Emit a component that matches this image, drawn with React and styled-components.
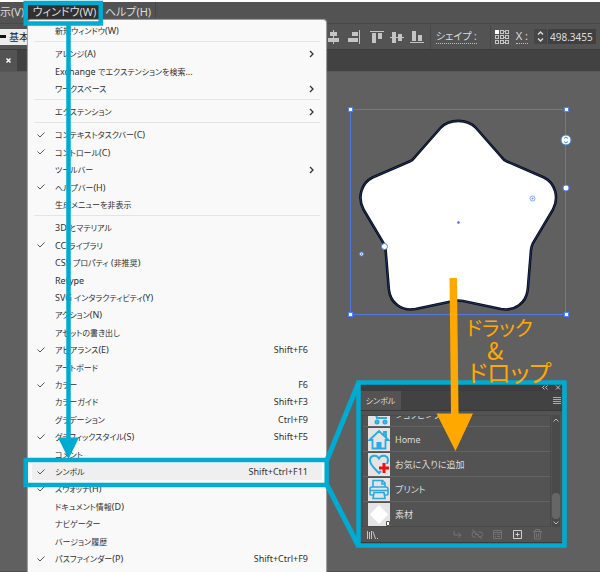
import React from 'react';
import styled, {createGlobalStyle} from 'styled-components';

const COLOR = {
    BAR: '#535353',
    DARK: '#424242',
    CANVAS: '#606060',
    LINE: '#484848',
    MENU: '#f9f9f9',
    MENU_TEXT: '#303030',
    TEXT: '#dcdcdc',
    ICON: '#c4c4c4',
    SELECTION: '#4f80ff',
    TEAL: '#00abd1',
    ORANGE: '#ffa800',
    SYMBOL: '#2ba9e1',
};

const FONT = '"Noto Sans", "Noto Sans CJK JP", sans-serif';

const GlobalStyle = createGlobalStyle`
  * {
    box-sizing: border-box;
  }

  body {
    margin: 0;
    background: #fff;
    font-family: ${FONT};
    font-feature-settings: 'palt';
  }

  button, input {
    margin: 0;
    padding: 0;
    border: 0;
    background: none;
    color: inherit;
    font: inherit;
    font-feature-settings: inherit;
  }

  svg {
    display: block;
  }
`;

const Screen = styled.div`
  position: relative;
  display: flex;
  flex-direction: column;
  height: 100vh;
  padding-top: 2px;
  overflow: hidden;
`;

const MenuBar = styled.nav`
  display: flex;
  flex: none;
  height: 22px;
  background: ${COLOR.BAR};
  border-bottom: 1px solid ${COLOR.LINE};
  color: ${COLOR.TEXT};
  font-size: 11px;
  line-height: 20px;
`;

const MenuBarButton = styled.button`
  width: ${p => p.$width}px;
  height: 20px;
  overflow: hidden;
  text-align: ${p => p.$align || 'center'};
  white-space: nowrap;
  background: ${p => p.$open ? '#303030' : 'transparent'};
`;

const Toolbar = styled.div`
  display: flex;
  flex: none;
  align-items: center;
  justify-content: space-between;
  height: 26px;
  padding-right: 4px;
  background: ${COLOR.BAR};
  border-bottom: 1px solid #3a3a3a;
  color: ${COLOR.TEXT};
  font-size: 10px;
`;

const BrushButton = styled.button`
  display: flex;
  align-items: center;
  gap: 3px;
  height: 16px;
  background: #ececec;
  color: #222;

  &::before {
    content: '';
    width: 6px;
    height: 3px;
    background: #111;
  }
`;

const ToolGroup = styled.div`
  display: flex;
  align-items: center;
  gap: ${p => p.$gap || 0}px;
  margin-right: ${p => p.$space || 0}px;
`;

const Divider = styled.span`
  width: 1px;
  height: 24px;
  margin-right: ${p => p.$space || 0}px;
  background: ${COLOR.LINE};
`;

const DottedLabel = styled.label`
  border-bottom: 1px dotted #c0c0c0;
  font-size: ${p => p.$size}px;
  line-height: 14px;
  white-space: pre;
`;

const Stepper = styled.button`
  display: grid;
  place-items: center;
  width: 13px;
  height: 15px;
  background: #464646;
`;

const NumberField = styled.input`
  width: 48px;
  height: 15px;
  padding-left: 2px;
  background: #404040;
  font-size: 10px;
`;

const TabStrip = styled.div`
  flex: none;
  height: 22px;
  background: ${COLOR.DARK};
  border-bottom: 1px solid #585858;
`;

const CloseTab = styled.button`
  display: grid;
  place-items: center;
  width: 17px;
  height: 21px;
  background: ${COLOR.BAR};
`;

const Canvas = styled.main`
  position: relative;
  flex: 1;
  background: ${COLOR.CANVAS};
  border-bottom: 1px solid #505050;
`;

const Artwork = styled.svg`
  position: absolute;
  left: 340px;
  top: 27px;
`;

const WindowMenu = styled.div`
  position: absolute;
  left: 28px;
  top: 20px;
  width: 298px;
  padding: 0 4px;
  background: ${COLOR.MENU};
  border-radius: 3px;
  box-shadow: 0 0 1px 1px #a4a4a4;
  color: ${COLOR.MENU_TEXT};
  font-size: 9px;
`;

const MenuGroup = styled.div`
  display: grid;
  grid-auto-rows: 17px 18px 17px 18px 17px;
  padding: 3px 0 2px;
  border-bottom: 1px solid #e4e4e4;
  margin: 0 2px;

  &:first-child {
    padding-top: 2px;
  }
`;

const MenuItem = styled.button`
  display: grid;
  grid-template-columns: 20px 1fr auto;
  align-items: center;
  margin: 0 -2px;
  padding: 0 14px 0 3px;
  background: ${p => p.$active ? '#efefef' : 'transparent'};
  border-radius: 2px;
  text-align: left;
  white-space: nowrap;
`;

const Kana = styled.span`
  font-size: 8px;
`;

const Submenu = styled.svg`
  margin-right: -8px;
`;

const Panel = styled.section`
  position: absolute;
  left: 360px;
  top: 384px;
  width: 202px;
  background: ${COLOR.BAR};
  border-bottom: 3px solid #3b3b3b;
  color: ${COLOR.TEXT};
  font-size: 9px;
`;

const PanelGrip = styled.div`
  display: flex;
  justify-content: flex-end;
  gap: 7px;
  height: 7px;
  padding-right: 1px;
  background: #3e3e3e;
`;

const PanelTabs = styled.div`
  display: flex;
  align-items: center;
  justify-content: space-between;
  height: 20px;
  padding-right: 1px;
  background: ${COLOR.DARK};
  border-bottom: 1px solid #393939;
`;

const PanelTab = styled.button`
  align-self: stretch;
  width: 41px;
  height: 19px;
  background: ${COLOR.BAR};
  font-size: 8px;
`;

const PanelBody = styled.div`
  display: flex;
  gap: 1px;
  margin: 4px 2px 0;
`;

const SymbolList = styled.ul`
  display: flex;
  flex: 1;
  flex-direction: column;
  justify-content: flex-end;
  height: 112px;
  margin: 0;
  padding: 0;
  overflow: hidden;
  border: 1px solid #4a4a4a;
  list-style: none;
`;

const SymbolRow = styled.li`
  flex: none;
  border-top: 1px solid #636363;
`;

const SymbolButton = styled.button`
  display: flex;
  align-items: center;
  gap: 5px;
  width: 100%;
  height: 24px;
  padding-left: 5px;
  white-space: nowrap;
`;

const Thumb = styled.span`
  width: 22px;
  height: 23px;
  background: #e4e4e4;
`;

const ScrollTrack = styled.div`
  display: flex;
  flex-direction: column;
  align-items: center;
  justify-content: space-between;
  width: 8px;
  padding: 3px 0 2px;
  background: #4a4a4a;
`;

const ScrollThumb = styled.span`
  width: 8px;
  height: 26px;
  margin: auto 0 2px;
  border-radius: 4px;
  background: #666;
`;

const PanelFooter = styled.div`
  display: flex;
  align-items: center;
  gap: 7px;
  height: 15px;
  padding: 0 18px 0 6px;

  button:first-child {
    margin-right: auto;
  }
`;

const Annotation = styled.svg`
  position: absolute;
  left: 0;
  top: 0;
  pointer-events: none;
`;

const Note = styled.p`
  position: absolute;
  left: 466px;
  top: 317px;
  display: grid;
  margin: 0;
  color: ${COLOR.ORANGE};
  font-family: "Noto Sans CJK JP", sans-serif;
  line-height: 22px;
  white-space: nowrap;
`;

const NoteLine = styled.span`
  padding-left: ${p => p.$indent || 0}px;
  font-size: ${p => p.$size}px;
`;

const MENU = [
    [{label: '新規ウィンドウ(W)'}],
    [
        {label: 'アレンジ(A)', submenu: true},
        {label: 'Exchange でエクステンションを検索...'},
        {label: 'ワークスペース', submenu: true},
    ],
    [{label: 'エクステンション', submenu: true}],
    [
        {label: 'コンテキストタスクバー(C)', checked: true},
        {label: 'コントロール(C)', checked: true},
        {label: 'ツールバー', submenu: true},
        {label: 'ヘルプバー(H)', checked: true},
        {label: '生成メニューを非表示'},
    ],
    [
        {label: '3D とマテリアル'},
        {label: 'CC ライブラリ', checked: true},
        {label: 'CSS プロパティ (非推奨)'},
        {label: 'Retype'},
        {label: 'SVG インタラクティビティ(Y)'},
        {label: 'アクション(N)'},
        {label: 'アセットの書き出し'},
        {label: 'アピアランス(E)', checked: true, keys: 'Shift+F6'},
        {label: 'アートボード'},
        {label: 'カラー', checked: true, keys: 'F6'},
        {label: 'カラーガイド', keys: 'Shift+F3'},
        {label: 'グラデーション', keys: 'Ctrl+F9'},
        {label: 'グラフィックスタイル(S)', checked: true, keys: 'Shift+F5'},
        {label: 'コメント'},
        {label: 'シンボル', checked: true, keys: 'Shift+Ctrl+F11', active: true},
        {label: 'スウォッチ(H)', checked: true},
        {label: 'ドキュメント情報(D)'},
        {label: 'ナビゲーター'},
        {label: 'バージョン履歴'},
        {label: 'パスファインダー(P)', checked: true, keys: 'Shift+Ctrl+F9'},
        {label: 'パターンオプション'},
    ],
];

const ALIGN_ICONS = {
    center: 'M6 0h1v14H6zM3 2h7v4H3zM1 8h11v4H1z',
    right: 'M12 0h1v14h-1zM5 2h6v4H5zM1 8h10v4H1z',
    top: 'M0 1h14v1H0zM2 3h4v10H2zM8 3h4v6H8z',
    middle: 'M0 7h14v1H0zM2 2h4v11H2zM8 4h4v7H8z',
    bottom: 'M0 12h14v1H0zM2 1h4v10H2zM8 5h4v6H8z',
};

const SYMBOLS = [
    {
        label: 'ショッピングカート',
        art: <g fill="none" stroke={COLOR.SYMBOL} strokeWidth="2">
            <path d="M2 5h4l3 10h10M6 7h14l-2 5H8"/>
            <circle cx="9" cy="19" r="1.5"/>
            <circle cx="17" cy="19" r="1.5"/>
        </g>,
    },
    {
        label: 'Home',
        art: <g fill="none" stroke={COLOR.SYMBOL} strokeWidth="1.8">
            <path d="M1.5 12 11 3l9.5 9h-3v8.5h-13V12zM16 7V4h2v5"/>
            <path d="M8.5 14h5v6h-5z" fill={COLOR.SYMBOL} stroke="none"/>
        </g>,
    },
    {
        label: 'お気に入りに追加',
        art: <>
            <path d="M13 18 11 20C7 16 2 12 2 7.5 2 2 8.5 1 11 5.5 13.5 1 20 2 20 7.5L19 11" fill="none"
                  stroke={COLOR.SYMBOL} strokeWidth="2"/>
            <path d="M14.5 10h3v3.5H21v3h-3.5V20h-3v-3.5H11v-3h3.5z" fill="#f01010"/>
        </>,
    },
    {
        label: 'プリント',
        art: <g fill="none" stroke={COLOR.SYMBOL} strokeWidth="1.6">
            <path d="M5 9V2.5h9.5L17 5v4M14 3v3h3M5 17H3q-1 0-1-1v-5q0-2 2-2h14q2 0 2 2v5q0 1-1 1h-2M2 12.5h18"/>
            <path d="M6 14.5h10l1 6H5z"/>
        </g>,
    },
    {
        label: '素材',
        art: <>
            <path d="M11 2l9 9.500-9 9.500-9-9.500z" fill="#fff"/>
            <path d="M18.5 18.5h3v4h-3z" fill="#fff" stroke="#555"/>
        </>,
    },
];

const FOOTER_ICONS = [
    {name: 'Place symbol', path: 'M3 3v4h7M7.5 4.5 10 7 7.5 9.5'},
    {name: 'Break link', path: 'M5 4H3.5a2.5 2.5 0 0 0 0 5H5M7.5 4H9a2.5 2.5 0 0 1 0 5H7.5M1 1.5l10 9.5M4 6.5h4'},
    {name: 'Symbol options', path: 'M2.5 2.5h8v8h-8zM2.5 4.5h8M4 6.500h1M6 6.500h3M4 8.500h1M6 8.500h3'},
    {name: 'New symbol', path: 'M2.5 2.5h8v8h-8zM4.5 6.5h4M6.5 4.5v4', on: true},
    {name: 'Delete symbol', path: 'M2 3.5h9M4.5 3V1.5h4V3M3.5 4v7h6V4M5.5 5.5v4M7.5 5.5v4'},
];

const OUTLINE = 'M440.5 128C449 118.5 467.5 118.5 476 128L501.5 157Q503.5 160 507 161.5L544 177.5C555 183 559.5 197 553 209.5L533 243Q531.5 246 531 250L527.7 290C526 303 515 311.5 501 309L463 301Q458.3 300 453.5 301L415.5 309C401.5 311.5 390.5 303 388.9 290L385.6 250Q385 246 383.5 243L363.5 209.5C357 197 361.5 183 372.5 177.5L409.5 161.5Q413 160 415 157Z';

function AlignIcon({kind}) {
    return (
        <button aria-label={`Align ${kind}`}>
            <svg width="14" height="14" fill={COLOR.ICON}><path d={ALIGN_ICONS[kind]}/></svg>
        </button>
    );
}

function ReferencePoint() {
    const cells = [0, 1, 2].flatMap(row => [0, 1, 2].map(col => ({row, col})));
    return (
        <button aria-label="Reference point">
            <svg width="16" height="16" fill="none" stroke={COLOR.ICON}>
                <path d="M2 2.5h12M2 8.5h12M2 13.5h12" strokeDasharray="1 1"/>
                {cells.map(({row, col}) =>
                    <rect key={`${row}${col}`} x={col * 5 + 1.5} y={row * 5 + 1.5} width="3" height="3"
                          fill={COLOR.BAR}/>)}
                <rect x="1.5" y="1.5" width="3" height="3" fill="#fff" stroke="#fff"/>
            </svg>
        </button>
    );
}

// japanese runs are set one step smaller than the latin around them
function MenuLabel({text}) {
    const runs = text.split(/([\x20-\x7e]+)/);
    return <span>{runs.map((run, i) => i % 2 ? run : run && <Kana key={i}>{run}</Kana>)}</span>;
}

function MenuRow({item}) {
    return (
        <MenuItem role={item.checked ? 'menuitemcheckbox' : 'menuitem'} aria-checked={item.checked} $active={item.active}>
            <svg width="11" height="8" fill="none" stroke="#555">
                {item.checked && <path d="M2.5 3.5 5 6l4.500-4.500"/>}
            </svg>
            <MenuLabel text={item.label}/>
            {item.keys && <span>{item.keys}</span>}
            {item.submenu &&
                <Submenu width="6" height="8" fill="none" stroke="#333" strokeWidth="1.3"><path d="M2 1l3 3-3 3"/></Submenu>}
        </MenuItem>
    );
}

function Star() {
    const corners = [[350, 109], [566, 109], [350, 314], [566, 314]];
    return (
        <Artwork width="240" height="230" viewBox="340 99 240 230">
            <path d={OUTLINE} fill="#fff" stroke="#080c18" strokeWidth="2.6"/>
            <path d={OUTLINE} fill="none" stroke="#2d4a94" strokeWidth="0.6"/>
            <g fill="none" stroke={COLOR.SELECTION}>
                <rect x="350.5" y="109.5" width="215" height="205" strokeOpacity="0.8"/>
                <g fill="#fff">
                    {corners.map(([x, y]) => <rect key={`${x}-${y}`} x={x - 1.5} y={y - 1.5} width="4" height="4"/>)}
                    <circle cx="566" cy="140" r="5" stroke="#3f87d8"/>
                    <circle cx="566" cy="188" r="3"/>
                    <circle cx="384.5" cy="246.5" r="3"/>
                    <circle cx="361.5" cy="254" r="2"/>
                    <circle cx="532.5" cy="198.5" r="2.5" strokeOpacity="0.7"/>
                </g>
                <path d="M564 138.500q2-3 4 0M564 141.500q2 3 4 0" stroke="#3f87d8"/>
                <circle cx="532.5" cy="198.5" r="0.5"/>
                <circle cx="361.5" cy="254" r="0.5"/>
                <circle cx="458.5" cy="222.5" r="1" fill={COLOR.SELECTION}/>
            </g>
        </Artwork>
    );
}

function SymbolPanel() {
    return (
        <Panel>
            <PanelGrip>
                <button aria-label="Collapse panel">
                    <svg width="6" height="6" fill="none" stroke={COLOR.ICON}><path d="M2.5.5l-2 2 2 2M5.5.5l-2 2 2 2"/></svg>
                </button>
                <button aria-label="Close panel">
                    <svg width="6" height="6" fill="none" stroke={COLOR.ICON}><path d="M1 .5l4 4M5 .5l-4 4"/></svg>
                </button>
            </PanelGrip>
            <PanelTabs>
                <PanelTab>シンボル</PanelTab>
                <button aria-label="Panel menu">
                    <svg width="8" height="7" stroke="#aaa"><path d="M0 .5h8M0 2.5h8M0 4.5h8M0 6.5h8"/></svg>
                </button>
            </PanelTabs>
            <PanelBody>
                <SymbolList>
                    {SYMBOLS.map(s => <SymbolRow key={s.label}>
                        <SymbolButton>
                            <Thumb><svg width="22" height="23">{s.art}</svg></Thumb>
                            {s.label}
                        </SymbolButton>
                    </SymbolRow>)}
                </SymbolList>
                <ScrollTrack>
                    <svg width="6" height="4" fill="none" stroke="#bbb"><path d="M.5 3.5 3 1l2.5 2.5"/></svg>
                    <ScrollThumb/>
                    <svg width="6" height="4" fill="none" stroke="#bbb"><path d="M.5.5 3 3 5.5.5"/></svg>
                </ScrollTrack>
            </PanelBody>
            <PanelFooter>
                <button aria-label="Symbol libraries">
                    <svg width="13" height="10" fill="none" stroke={COLOR.ICON}>
                        <path d="M1.500 1v8M3.500 2v7M5.500 1v8M7 1.500 9.500 9M11 8.500h1"/>
                    </svg>
                </button>
                {FOOTER_ICONS.map(i => <button key={i.name} aria-label={i.name}>
                    <svg width="13" height="13" fill="none" stroke={i.on ? '#d0d0d0' : '#747474'}><path d={i.path}/></svg>
                </button>)}
            </PanelFooter>
        </Panel>
    );
}

export default function App() {
    return (
        <Screen>
            <GlobalStyle/>
            <MenuBar>
                <MenuBarButton $width={28} $align="left">示(V)</MenuBarButton>
                <MenuBarButton $width={73} $open>ウィンドウ(W)</MenuBarButton>
                <MenuBarButton $width={54}>ヘルプ(H)</MenuBarButton>
                <Divider/>
            </MenuBar>

            <Toolbar>
                <BrushButton>基本</BrushButton>
                <ToolGroup>
                    <ToolGroup $gap={6} $space={9}>
                        <AlignIcon kind="center"/>
                        <AlignIcon kind="right"/>
                    </ToolGroup>
                    <ToolGroup $gap={6} $space={6}>
                        <AlignIcon kind="top"/>
                        <AlignIcon kind="middle"/>
                        <AlignIcon kind="bottom"/>
                    </ToolGroup>
                    <Divider $space={5}/>
                    <ToolGroup $space={13}>
                        <DottedLabel as="button" $size={10}>シェイプ :</DottedLabel>
                    </ToolGroup>
                    <Divider $space={3}/>
                    <ToolGroup $space={6}>
                        <ReferencePoint/>
                    </ToolGroup>
                    <ToolGroup $space={6}>
                        <DottedLabel htmlFor="x-position" $size={11}>X :</DottedLabel>
                    </ToolGroup>
                    <ToolGroup $gap={1}>
                        <Stepper aria-label="Step X">
                            <svg width="7" height="11" fill="none" stroke="#ddd" strokeWidth="1.4">
                                <path d="M1 3.5 3.5 1 6 3.5M1 7.5 3.5 10 6 7.5"/>
                            </svg>
                        </Stepper>
                        <NumberField id="x-position" defaultValue="498.3455"/>
                    </ToolGroup>
                </ToolGroup>
            </Toolbar>

            <TabStrip>
                <CloseTab aria-label="Close document">
                    <svg width="5" height="5" fill="none" stroke="#fff" strokeWidth="1.4"><path d="M.5.5l4 4M4.5.5l-4 4"/></svg>
                </CloseTab>
            </TabStrip>

            <Canvas>
                <Star/>
            </Canvas>

            <SymbolPanel/>

            <WindowMenu role="menu">
                {MENU.map(group => <MenuGroup key={group[0].label}>
                    {group.map(item => <MenuRow key={item.label} item={item}/>)}
                </MenuGroup>)}
            </WindowMenu>

            <Annotation width="600" height="572">
                <g fill="none" stroke={COLOR.TEAL} strokeWidth="4.5">
                    <rect x="25.7" y="3" width="75" height="20.5"/>
                    <path d="M68.5 25v415"/>
                    <rect x="25.7" y="460" width="301" height="25"/>
                    <path d="M327 460 358.5 383M327 485l31.5 61" strokeWidth="5"/>
                    <rect x="358.5" y="382.5" width="206" height="163"/>
                </g>
                <path d="M58 437.5h21L68.5 459z" fill={COLOR.TEAL}/>
                <path d="M449.5 278h7.5l1.5 135.5H473L455.5 451l-19-37.5H451z" fill={COLOR.ORANGE}/>
            </Annotation>
            <Note>
                <NoteLine $size={20}>ドラック</NoteLine>
                <NoteLine $size={24} $indent={21}>&amp;</NoteLine>
                <NoteLine $size={24} $indent={2}>ドロップ</NoteLine>
            </Note>
        </Screen>
    );
}
